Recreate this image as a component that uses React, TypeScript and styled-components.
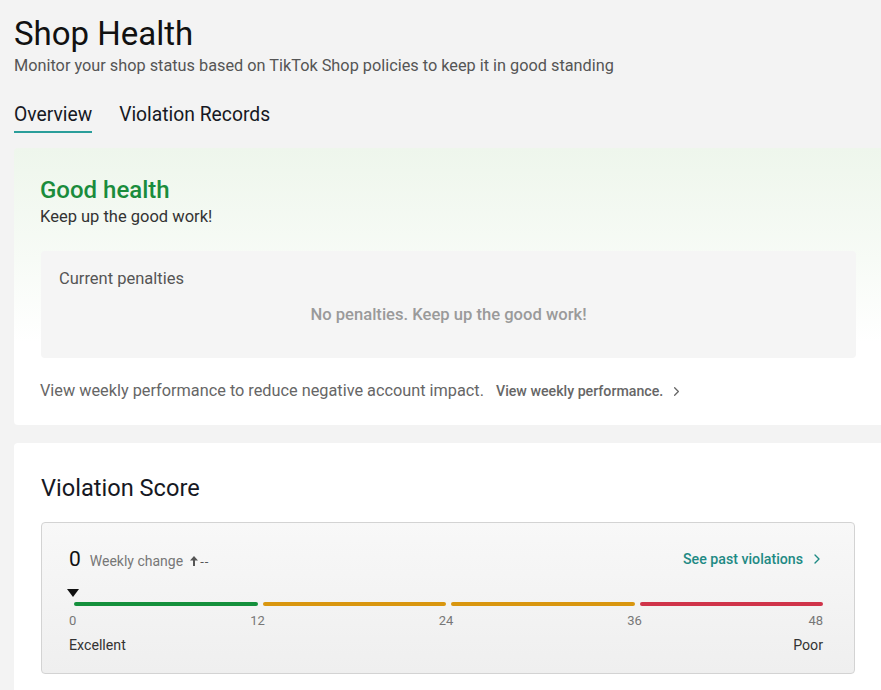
import React from 'react'
import styled, { createGlobalStyle } from 'styled-components'
import { ChevronRight } from 'lucide-react'

const GlobalStyle = createGlobalStyle`
	body {
		margin: 0;
		background: #f3f3f3;
		font-family: Roboto, "Liberation Sans", sans-serif;
		color: #161823;
	}
`

const segments = [
	{ color: '#14903c' },
	{ color: '#d9960f' },
	{ color: '#d9960f' },
	{ color: '#d0344a' },
]

const ticks = ['0', '12', '24', '36', '48']

const UpArrow = () => (
	<svg width="8" height="10" viewBox="0 0 8 10">
		<path d="M4 0 L8 4.5 H5 V10 H3 V4.5 H0 Z" fill="#555" />
	</svg>
)

export default function App() {
	return (
		<Page>
			<GlobalStyle />
			<Title>Shop Health</Title>
			<Subtitle>
				Monitor your shop status based on TikTok Shop policies to keep it in
				good standing
			</Subtitle>
			<Tabs>
				<Tab active>Overview</Tab>
				<Tab>Violation Records</Tab>
			</Tabs>

			<HealthCard>
				<HealthTitle>Good health</HealthTitle>
				<HealthText>Keep up the good work!</HealthText>
				<PenaltyBox>
					<PenaltyLabel>Current penalties</PenaltyLabel>
					<PenaltyEmpty>No penalties. Keep up the good work!</PenaltyEmpty>
				</PenaltyBox>
				<WeeklyRow>
					<WeeklyText>
						View weekly performance to reduce negative account impact.
					</WeeklyText>
					<WeeklyLink>
						View weekly performance.
						<ChevronRight size={15} strokeWidth={2} />
					</WeeklyLink>
				</WeeklyRow>
			</HealthCard>

			<ScoreCard>
				<SectionTitle>Violation Score</SectionTitle>
				<ScoreBox>
					<ScoreHeader>
						<ScoreLeft>
							<ScoreValue>0</ScoreValue>
							<ChangeLabel>Weekly change</ChangeLabel>
							<ChangeValue>
								<UpArrow />
								--
							</ChangeValue>
						</ScoreLeft>
						<PastLink>
							See past violations
							<ChevronRight size={16} strokeWidth={2} />
						</PastLink>
					</ScoreHeader>
					<Meter>
						<Marker />
						<Bars>
							{segments.map((s, i) => (
								<Bar key={`seg-${i}`} color={s.color} />
							))}
						</Bars>
						<Ticks>
							{ticks.map(t => (
								<Tick key={t}>
									<span>{t}</span>
								</Tick>
							))}
						</Ticks>
						<Ends>
							<span>Excellent</span>
							<span>Poor</span>
						</Ends>
					</Meter>
				</ScoreBox>
			</ScoreCard>
		</Page>
	)
}

const Page = styled.div`
	padding: 15px 0 0 14px;
	height: 675px;
	overflow: hidden;
`

const Title = styled.h1`
	margin: 0;
	font-size: 33px;
	font-weight: 400;
	line-height: 38px;
	color: #111;
`

const Subtitle = styled.div`
	margin-top: 2px;
	font-size: 16.3px;
	line-height: 22px;
	color: #555;
`

const Tabs = styled.div`
	display: flex;
	gap: 27px;
	margin-top: 26px;
`

const Tab = styled.div<{ active?: boolean }>`
	font-size: 19.3px;
	line-height: 24px;
	padding-bottom: 4px;
	color: #161823;
	border-bottom: 2px solid ${p => (p.active ? '#2a9e9a' : 'transparent')};
`

const HealthCard = styled.section`
	margin-top: 15px;
	padding: 28px 25px 24px 26px;
	background: linear-gradient(180deg, #eef6ec 0%, #f7fbf6 40%, #ffffff 70%);
	border-radius: 4px 0 0 4px;
`

const HealthTitle = styled.div`
	font-size: 24px;
	font-weight: 500;
	line-height: 28px;
	color: #1a8c3c;
`

const HealthText = styled.div`
	margin-top: 3px;
	font-size: 16.5px;
	line-height: 20px;
	color: #333;
`

const PenaltyBox = styled.div`
	margin-top: 24px;
	margin-left: 1px;
	padding: 18px 18px 33px;
	background: #f5f5f5;
	border-radius: 4px;
`

const PenaltyLabel = styled.div`
	font-size: 16.5px;
	line-height: 20px;
	color: #555;
`

const PenaltyEmpty = styled.div`
	margin-top: 16px;
	text-align: center;
	font-size: 16.6px;
	font-weight: 500;
	line-height: 20px;
	color: #9a9a9a;
`

const WeeklyRow = styled.div`
	display: flex;
	align-items: center;
	gap: 12px;
	margin-top: 23px;
`

const WeeklyText = styled.span`
	font-size: 16.3px;
	line-height: 20px;
	color: #666;
`

const WeeklyLink = styled.span`
	display: inline-flex;
	align-items: center;
	gap: 6px;
	font-size: 14.2px;
	font-weight: 500;
	color: #666;
`

const ScoreCard = styled.section`
	margin-top: 18px;
	padding: 31px 26px 20px 27px;
	background: #fff;
	border-radius: 4px 0 0 4px;
`

const SectionTitle = styled.div`
	font-size: 23.6px;
	line-height: 28px;
	color: #161823;
`

const ScoreBox = styled.div`
	margin-top: 20px;
	padding: 23px 27px 19px 27px;
	border: 1px solid #d3d3d3;
	border-radius: 4px;
	background: linear-gradient(180deg, #f8f8f8 0%, #efefef 100%);
`

const ScoreHeader = styled.div`
	display: flex;
	justify-content: space-between;
	align-items: center;
`

const ScoreLeft = styled.div`
	display: flex;
	align-items: baseline;
	gap: 9px;
`

const ScoreValue = styled.span`
	font-size: 21px;
	line-height: 26px;
	color: #111;
`

const ChangeLabel = styled.span`
	font-size: 14px;
	color: #777;
`

const ChangeValue = styled.span`
	display: inline-flex;
	align-items: center;
	gap: 2px;
	font-size: 13px;
	letter-spacing: 1px;
	color: #555;
	margin-left: -2px;
`

const PastLink = styled.span`
	display: inline-flex;
	align-items: center;
	gap: 6px;
	font-size: 14.2px;
	font-weight: 500;
	color: #1e8a84;
	margin-right: 2px;
`

const Meter = styled.div`
	margin-top: 17px;
	padding-right: 4px;
`

const Marker = styled.div`
	width: 0;
	height: 0;
	margin-left: -2px;
	border-left: 6px solid transparent;
	border-right: 6px solid transparent;
	border-top: 8px solid #111;
`

const Bars = styled.div`
	display: flex;
	gap: 5px;
	margin-top: 5px;
	padding-left: 5px;
`

const Bar = styled.div<{ color: string }>`
	flex: 1;
	height: 4px;
	border-radius: 2px;
	background: ${p => p.color};
`

const Ticks = styled.div`
	display: flex;
	justify-content: space-between;
	margin-top: 6px;
	padding: 0 1px 0 4px;
`

const Tick = styled.span`
	width: 0;
	display: flex;
	justify-content: center;
	font-size: 13px;
	line-height: 18px;
	color: #777;
	white-space: nowrap;

	&:first-child {
		justify-content: flex-start;
		margin-left: -4px;
	}
	&:last-child {
		justify-content: flex-end;
		margin-right: -1px;
	}
`

const Ends = styled.div`
	display: flex;
	justify-content: space-between;
	margin-top: 6px;
	font-size: 14.2px;
	line-height: 18px;
	color: #333;
`
